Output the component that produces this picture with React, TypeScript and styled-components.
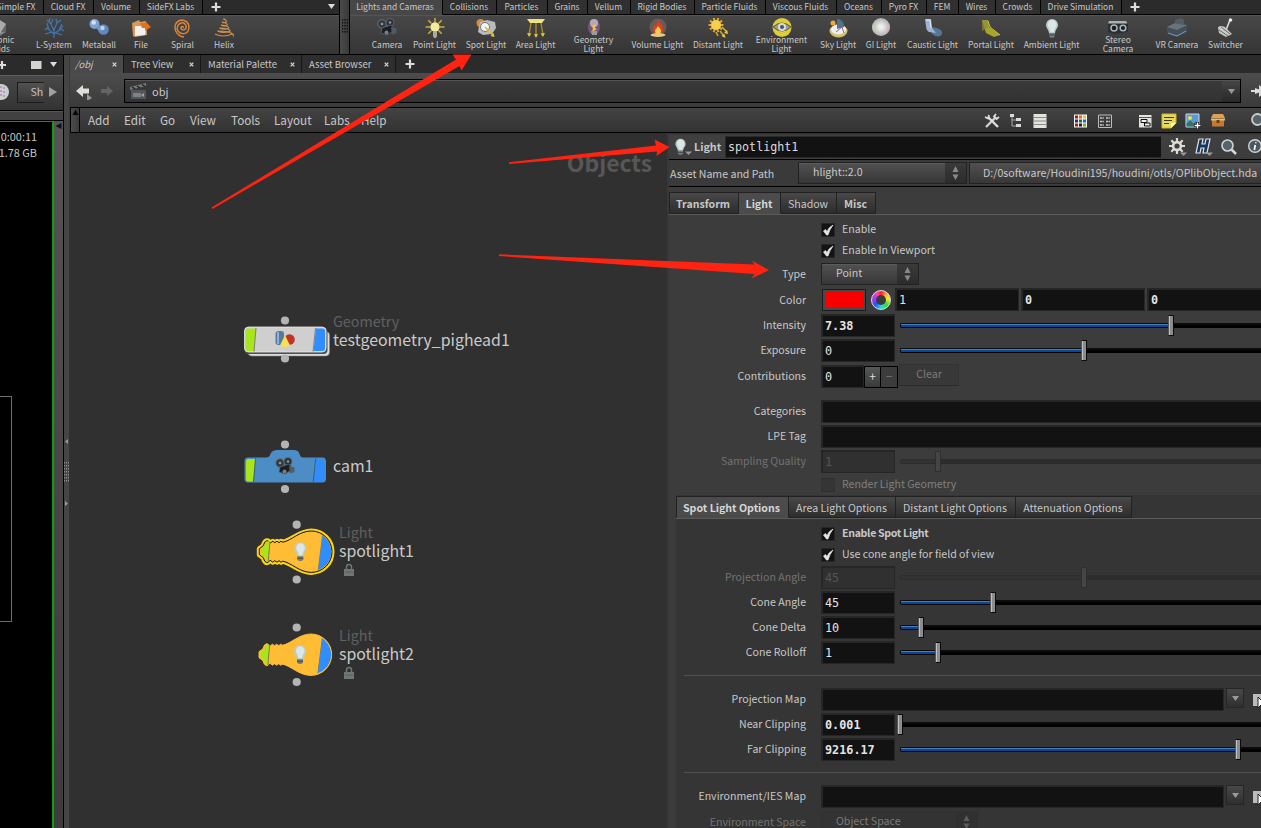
import React from 'react';
import styled, { createGlobalStyle, css } from 'styled-components';

const Global = createGlobalStyle`
  * { box-sizing: border-box; }
  body {
    margin: 0; background: #303030; overflow: hidden; color: #c8c8c8;
    font-family: "Noto Sans CJK SC", "Noto Sans", sans-serif; font-size: 10.6px;
    line-height: 14px; white-space: nowrap;
  }
`;
const mono = css`font-family: "DejaVu Sans Mono", "Liberation Mono", monospace;`;
const raised = css`background: linear-gradient(#515151, #373737);`;

/* ---------- frame ---------- */
const Window = styled.div`position: relative; width: 1261px; height: 828px; overflow: hidden; display: flex; flex-direction: column;`;
const Shelves = styled.div`display: flex; height: 55px; flex: none; border-bottom: 1px solid #000;`;
const Shelf = styled.div<{ $w?: number }>`
  display: flex; flex-direction: column; overflow: hidden;
  ${p => (p.$w ? `width: ${p.$w}px; flex: none;` : 'flex: 1;')}
`;
const ShelfTabs = styled.div`display: flex; height: 15px; flex: none; background: #2b2b2b; align-items: stretch; font-size: 8.5px;`;
const ShelfTab = styled.div<{ $w: number; $on?: boolean; $ml?: number }>`
  width: ${p => p.$w}px; flex: none; margin-left: ${p => p.$ml ?? 0}px; line-height: 13px; text-align: center;
  border-right: 1px solid #000; border-bottom: 1px solid ${p => (p.$on ? '#474747' : '#000')};
  background: ${p => (p.$on ? '#474747' : '#303030')}; padding-right: ${p => (p.$on ? 2 : 1)}px;
`;
const TabRest = styled.div<{ $flat?: boolean }>`
  flex: 1; display: flex; align-items: center; justify-content: space-between;
  padding: 0 4px 1px ${p => (p.$flat ? 9 : 8)}px; border-bottom: ${p => (p.$flat ? 0 : 1)}px solid #000;
`;
const Tools = styled.div<{ $pl: number }>`
  flex: 1; display: flex; padding-left: ${p => p.$pl}px; background: linear-gradient(#484848, #353535);
  border-top: 1px solid #555;
`;
const Tool = styled.div<{ $w: number; $ml?: number; $mr?: number }>`
  width: ${p => p.$w}px; flex: none; margin: 0 ${p => p.$mr ?? 0}px 0 ${p => p.$ml ?? 0}px; padding-top: 2px;
  display: flex; flex-direction: column; align-items: center; font-size: 8.5px;
`;
const ToolLabel = styled.div<{ $two?: boolean }>`
  line-height: 9px; text-align: center; white-space: pre; margin-top: ${p => (p.$two ? -3 : 2)}px; position: relative;
`;
const Grip = styled.div`
  width: 11px; flex: none; background: linear-gradient(90deg, #4b4b4b, #3a3a3a); border: solid #000; border-width: 0 1px;
  display: flex; justify-content: center; padding-top: 19px;
`;
const Main = styled.div`flex: 1; display: flex; min-height: 0;`;

/* ---------- left viewer ---------- */
const Viewer = styled.div`width: 64px; flex: none; border-right: 1px solid #000; display: flex; flex-direction: column; overflow: hidden;`;
const ViewerTabs = styled.div`height: 20px; flex: none; background: #2b2b2b; display: flex; align-items: center; justify-content: space-between; padding: 0 6px 1px 0;`;
const ViewerTools = styled.div`
  height: 36px; flex: none; border-top: 1px solid #606060; border-bottom: 1px solid #000; background: linear-gradient(#484848, #333);
  display: flex; align-items: center; justify-content: space-between; padding: 0 6px 2px 0;
`;
const ShButton = styled.div`width: 27px; height: 21px; ${raised} border: 1px solid #1c1c1c; border-right: 0; padding: 2px 0 0 13px;`;
const ViewerBar = styled.div`height: 10px; flex: none; background: #414141; border-top: 1px solid #555; border-bottom: 1px solid #000;`;
const ViewerBody = styled.div`flex: 1; display: flex; min-height: 0;`;
const Viewport = styled.div`
  width: 53px; background: #000; border: solid #0b970b; border-width: 1px 1px 0 0; padding: 6px 15px 0 0;
  display: flex; flex-direction: column; align-items: flex-end; font-size: 10.9px; line-height: 16px; overflow: hidden;
`;
const SafeFrame = styled.div`width: 12px; height: 226px; border: solid #6c6c6c; border-width: 1px 1px 1px 0; align-self: flex-start; margin-top: 236px;`;
const Strip = styled.div`width: 10px; background: linear-gradient(#555, #4c4c4c 30%, #3c3c3c); border-left: 1px solid #666; padding: 1px 0 0 1px;`;
const Splitter = styled.div`
  width: 6px; flex: none; background: #454545; display: flex; flex-direction: column; align-items: center; justify-content: flex-start; padding-top: 383px; border-right: 1px solid #3a3a3a;
`;

/* ---------- network pane ---------- */
const Pane = styled.div`flex: 1; display: flex; flex-direction: column; min-width: 0; background: #3a3a3a;`;
const PaneTabs = styled.div`height: 18px; flex: none; display: flex; background: #2b2b2b; font-size: 9.5px;`;
const PaneTab = styled.div<{ $w: number; $on?: boolean }>`
  width: ${p => p.$w}px; flex: none; display: flex; align-items: center; justify-content: space-between; padding: 0 6px 0 7px;
  border-right: 1px solid #171717; ${p => (p.$on ? 'background:#494949;font-style:italic;padding:0 6px 0 5px;' : 'background:#2e2e2e;')}
`;
const PathRow = styled.div`
  height: 35px; flex: none; display: flex; align-items: center; background: linear-gradient(#4c4c4c, #4a4a4a 5px, #3a3a3a); border-bottom: 1px solid #000; padding-top: 2px;
`;
const PathField = styled.div`
  width: 1117px; height: 24px; flex: none; border: 1px solid #000; background: linear-gradient(#3a3a3a, #323232);
  box-shadow: inset 0 1px #555; display: flex; align-items: center; padding-left: 5px; font-size: 11px; gap: 5px;
`;
const PathDrop = styled.div`margin-left: auto; width: 18px; height: 21px; background: linear-gradient(#454545, #282828); display: flex; align-items: center; justify-content: center;`;
const MenuRow = styled.div`
  height: 25px; flex: none; display: flex; align-items: center; background: linear-gradient(#434343, #333);
  border-bottom: 1px solid #000; font-size: 11.7px;
`;
const MenuHandle = styled.div`width: 10px; align-self: stretch; flex: none; background: linear-gradient(90deg,#4c4c4c,#3a3a3a); border: solid #000; border-width: 0 1px; padding: 1px 0 0 1px;`;
const MenuItem = styled.div<{ $w: number }>`width: ${p => p.$w}px; flex: none; padding-bottom: 1px;`;
const MenuIcon = styled.div<{ $ml: number }>`margin-left: ${p => p.$ml}px; flex: none; padding-top: 2px;`;
const Content = styled.div`flex: 1; display: flex; min-height: 0;`;

const Canvas = styled.div`position: relative; width: 598px; flex: none; margin-left: -1px; background: #303030; overflow: hidden;`;
const Watermark = styled.div`position: absolute; right: 15px; top: 13px; font: bold 22.9px/32px "Noto Sans CJK SC", sans-serif; color: #575757;`;
const NodeArt = styled.svg`position: absolute; left: 0; top: 0;`;
const NodeLabel = styled.div<{ $x: number; $y: number }>`
  position: absolute; left: ${p => p.$x}px; top: ${p => p.$y}px; font-size: 15.9px; line-height: 20px; color: #cacaca;
`;
const NodeType = styled.div`font-size: 14.3px; line-height: 17px; height: 18px; margin-top: -1px; color: #606060;`;

/* ---------- parameters ---------- */
const Params = styled.div`flex: 1; min-width: 0; background: #3c3c3c; border-left: 2px solid #383838; display: flex; flex-direction: column; overflow: hidden;`;
const Header = styled.div`height: 27px; flex: none; display: flex; align-items: center; border-bottom: 1px solid #000; background: linear-gradient(#333 1px, #404040 2px, #3c3c3c); padding-left: 4px;`;
const OpType = styled.div`font-weight: bold; font-size: 10.7px; width: 31px; flex: none; margin-left: 1px; padding-top: 1px;`;
const NameField = styled.div`width: 436px; height: 22px; flex: none; margin-top: 1px; background: #121212; border: 1px solid #2a2a2a; border-right: 0; ${mono} font-size: 11.7px; color: #dcdcdc; padding: 3px 0 0 2px;`;
const HeaderIcons = styled.div`display: flex; gap: 6px; padding: 1px 0 0 6px;`;
const AssetRow = styled.div`height: 27px; flex: none; display: flex; align-items: center; border-bottom: 1px solid #000; padding: 0 0 1px 1px; background: #3a3a3a;`;
const AssetLabel = styled.div`width: 128px; flex: none; padding-top: 3px;`;
const PathButton = styled.div`margin-left: 2px; width: 320px; height: 22px; flex: none; ${raised} border: 1px solid #222; padding: 3px 0 0 13px;`;
const Combo = styled.div<{ $w: number; $off?: boolean }>`
  width: ${p => p.$w}px; height: 22px; flex: none; display: flex; ${raised} border: 1px solid #222; box-shadow: inset 0 1px #5a5a5a; line-height: 18px; padding-left: 14px;
  ${p => p.$off && 'background:#333;box-shadow:none;border-color:#303030;color:#7b7b7b;'}
`;
const ComboArrows = styled.div<{ $off?: boolean }>`margin-left: auto; width: 21px; background: ${p => (p.$off ? '#303030' : 'linear-gradient(#3a3a3a,#2c2c2c)')}; display: flex; align-items: center; justify-content: center;`;

const Tabs = styled.div<{ $mt: number }>`display: flex; height: 23px; flex: none; margin-top: ${p => p.$mt}px; border-bottom: 1px solid #5a5a5a;`;
const Tab = styled.div<{ $w: number; $on?: boolean; $b?: boolean }>`
  width: ${p => p.$w}px; flex: none; text-align: center; line-height: 22px; border: 1px solid #222; border-left-width: 0; padding-right: 1px;
  &:first-child { border-left-width: 1px; padding-right: 2px; }
  font-weight: ${p => (p.$b ? 'bold' : 'normal')};
  ${p => (p.$on ? 'background:#4b4b4b;border-bottom-color:#4b4b4b;color:#d6d6d6;' : css`background: linear-gradient(#484848, #2d2d2d);`)}
`;
const Sub = styled.div`margin-left: 7px; background: #353535; flex: 1; display: flex; flex-direction: column;`;
const Row = styled.div<{ $h?: number; $mt?: number }>`display: flex; align-items: center; height: ${p => p.$h ?? 25}px; flex: none; margin-top: ${p => p.$mt ?? 0}px;`;
const Label = styled.div<{ $w: number; $off?: boolean; $dy?: number }>`
  width: ${p => p.$w}px; flex: none; margin-right: 15px; text-align: right; color: ${p => (p.$off ? '#737373' : '#c8c8c8')};
  padding-top: ${p => p.$dy ?? 0}px; padding-bottom: 1px;
`;
const Field = styled.div<{ $w: number; $b?: boolean; $off?: boolean; $gap?: number }>`
  width: ${p => p.$w}px; height: 23px; flex: none; border: 1px solid #262626; border-width: 2px 1px 1px 2px; background: ${p => (p.$off ? '#303030' : '#121212')};
  ${mono} font-size: 11.8px; font-weight: ${p => (p.$b ? 'bold' : 'normal')}; line-height: 20px; padding-left: 2px; margin-right: ${p => p.$gap ?? 0}px;
  color: ${p => (p.$off ? '#555' : '#e4e4e4')};
`;
const Check = styled.div<{ $off?: boolean }>`
  width: 14px; height: 14px; flex: none; margin: 1px 7px 0 0; background: ${p => (p.$off ? '#353535' : '#131313')}; border: 1px solid ${p => (p.$off ? '#303030' : '#262626')};
`;
const CheckText = styled.div<{ $off?: boolean; $b?: boolean }>`color: ${p => (p.$off ? '#808080' : '#c8c8c8')}; font-weight: ${p => (p.$b ? 'bold' : 'normal')}; letter-spacing: ${p => (p.$b ? '-0.32px' : '0')}; padding-bottom: 1px;`;
const Track = styled.div<{ $off?: boolean }>`
  width: 420px; height: 5px; flex: none; margin: 0 0 0 5px; background: ${p => (p.$off ? '#2c2c2c' : '#000')}; display: flex; align-items: center; border-radius: 2px;
  box-shadow: inset 0 2px ${p => (p.$off ? '#2e2e2e' : '#0c0c0c')};
`;
const Fill = styled.div<{ $w: number; $off?: boolean }>`
  width: ${p => p.$w}px; height: 3px; flex: none; margin-left: 1px; ${p => (p.$off ? 'background:#333;' : 'background: linear-gradient(#4a7fb5 1px, #04489c 1px);')}
`;
const Handle = styled.div<{ $off?: boolean; $min?: boolean }>`
  width: 6px; height: 21px; flex: none; margin-left: ${p => (p.$min ? -4 : -1)}px; background: ${p => (p.$off ? '#454545' : 'linear-gradient(90deg,#c0c0c0 1px,#8c8c8c 1px 4px,#5c5c5c 4px)')}; border: 1px solid ${p => (p.$off ? '#2e2e2e' : '#0b0b0b')}; border-left-color: ${p => (p.$off ? '#2e2e2e' : '#555')};
`;
const Swatch = styled.div`width: 44px; height: 22px; margin: 0 3px 0 1px; border: 1px solid #1c1c1c; background: #f80000; box-shadow: inset 0 0 0 2px #484848; flex: none;`;
const Wheel = styled.div`
  width: 20px; height: 20px; border-radius: 50%; flex: none; margin: 0 4px 0 2px; border: 1px solid #ddd; display: flex; align-items: center; justify-content: center;
  background: conic-gradient(#f22, #fb3 50deg, #ee3 80deg, #3d3 130deg, #2dd 180deg, #25f 230deg, #b3f 290deg, #f4a 330deg, #f22);
  &::after { content: ''; width: 10px; height: 10px; border-radius: 50%; background: #3c3c3c; }
`;
const Small = styled.div<{ $off?: boolean }>`
  width: ${p => (p.$off ? 18 : 17)}px; height: 22px; flex: none; border: 1px solid #000; margin-left: ${p => (p.$off ? -1 : 0)}px;
  ${p => (p.$off ? 'background:#3c3c3c;color:#777;' : 'background:linear-gradient(#585858,#3a3a3a);color:#ddd;')} text-align: center; line-height: 18px; font-size: 12px;
`;
const Clear = styled.div`width: 60px; height: 22px; margin: -3px 0 0 1px; background: #383838; border: 1px solid #333; border-bottom-color: #2b2b2b; color: #7c7c7c; text-align: center; line-height: 18px; flex: none;`;
const Divider = styled.div<{ $mt: number; $mb: number }>`height: 1px; flex: none; background: #505050; margin: ${p => p.$mt}px 0 ${p => p.$mb}px 8px;`;
const Drop = styled.div`width: 18px; height: 20px; flex: none; margin: -3px 8px 0 2px; background: linear-gradient(#484848, #2f2f2f); border: 1px solid #262626; display: flex; align-items: center; justify-content: center;`;
const Overlay = styled.svg`position: absolute; left: 0; top: 0; pointer-events: none;`;
const Glyph = styled.svg`flex: none; display: block;`;

/* ---------- small drawings ---------- */
const Svg = ({ s = 20, w, children }: { s?: number; w?: number; children: React.ReactNode }) => (
  <Glyph width={w ?? s} height={s} viewBox={`0 0 ${w ?? s} ${s}`}>{children}</Glyph>
);
const Plus = () => <Svg s={10}><path d="M5 .5v9M.5 5h9" stroke="#dcdcdc" strokeWidth="2.200" /></Svg>;
const Tri = ({ c = '#ddd', s = 7 }: { c?: string; s?: number }) => <Svg s={s}><path d={`M0 1H${s}L${s / 2} ${s - 1}Z`} fill={c} /></Svg>;
const X = () => <Svg s={5}><path d="M.7 .7l3.600 3.600M4.300 .7L.7 4.300" stroke="#d8d8d8" strokeWidth="1.200" /></Svg>;
const UpDown = ({ c = '#8a8a8a' }: { c?: string }) => <Svg s={14} w={7}><path d="M.5 6L3.500 0l3 6zM.5 8.500l3 5.500l3-5.500z" fill={c} /></Svg>;
const Bulb = ({ dx = 0, dy = 0, k = 1 }: { dx?: number; dy?: number; k?: number }) => (
  <g transform={`translate(${dx} ${dy}) scale(${k})`}>
    <path d="M10 1a6 6 0 0 1 6 6c0 3-2.500 4-3 8H7c-.5-4-3-5-3-8a6 6 0 0 1 6-6z" fill="#b9cccd" />
    <path d="M10 2a4.500 4.500 0 0 1 4.500 5c0 2-2 3-2.500 7H8.500C8 10 6 9 6 7a4 4.500 0 0 1 4-5z" fill="#dbe7e6" />
    <path d="M7 15h6v3l-1.500 1.800h-3L7 18z" fill="#777d78" /><path d="M7 17h6" stroke="#444" />
  </g>
);
const Cam = () => (
  <g>
    <circle cx="5" cy="6" r="4.300" fill="#343b41" stroke="#687178" /><circle cx="13" cy="4.500" r="4" fill="#2b3136" stroke="#5f676e" />
    <path d="M5 10l9-3 4 5-8 5-6-2z" fill="#1b1f23" stroke="#5d656d" strokeWidth=".8" /><path d="M14 9l5.500 1.500v4.500L15 16.500z" fill="#525b64" />
    <circle cx="5" cy="6" r="1.300" fill="#8b959d" /><circle cx="13" cy="4.500" r="1.300" fill="#8b959d" /><circle cx="9.500" cy="14.500" r="2" fill="#75808a" />
  </g>
);
const rays = (n: number, r1: number, r2: number, cx = 10, cy = 9) =>
  Array.from({ length: n }, (_, i) => { const a = (i * 2 * Math.PI) / n; return `M${cx + r1 * Math.cos(a)} ${cy + r1 * Math.sin(a)}L${cx + r2 * Math.cos(a)} ${cy + r2 * Math.sin(a)}`; }).join('');

const art: Record<string, React.ReactNode> = {
  platonic: <><path d="M10 1l8 5v8l-8 5-8-5V6z" fill="#858585" /><path d="M10 1l8 5-5 8-3 5V8z" fill="#aaa" /><path d="M18 6v8l-5 0z" fill="#666" /></>,
  lsystem: <path d="M10 20L10 11M10 16L3 10L1 12M5 12L3 5M10 13L7 6L3 2M7 6L9 1M10 12L13 5L12 1M13 5L17 2M10 16L17 11L20 13M15 12L18 6M8 14L1 16M12 15L18 17M5 4L6 0M17 11L19 8" stroke="#4077b8" strokeWidth="1.200" fill="none" />,
  metaball: <><circle cx="5.500" cy="6" r="5" fill="#7fa2d4" /><circle cx="14.500" cy="11.500" r="5.300" fill="#5f87c0" /><path d="M7 10l4-3 3 3-3 4z" fill="#6f95cb" /><circle cx="4.700" cy="4.500" r="2.300" fill="#d3e2f8" /><circle cx="13.500" cy="10" r="2.200" fill="#bcd2f2" /></>,
  file: <><path d="M1 5l7-3 1 2 6-1 1 14-12 2-2-1z" fill="#d79a55" /><path d="M4 8h12l-2 9-10 1z" fill="#f0f0ee" /><path d="M9 5h5V3l6 6-6 4v-3h-3z" fill="#e8701a" /></>,
  spiral: <path d="M10 10c1-2-2-2-2 0s4 3 5 0-2-6-5-5-5 5-3 8 8 4 10 0 1-9-4-10.500-9 2-9 7 4 9 9 9.500" stroke="#d9843a" strokeWidth="1.500" fill="none" />,
  helix: <path d="M9 1h2M8 4q2 1.500 4.500 0M7 7q3 2 6.500 0M5.500 10q4.500 2.500 9.500 0M3.500 13q6 3 13 0M1 16q8 4 17 0M10 1q3 1.500 2 3M8 4q5 1 5.500 3M7 7q7 1 8 3M5.500 10q9 0 11 3M3.500 13q12 0 15 3t1 3" stroke="#cf8f4f" strokeWidth="1.200" fill="none" />,
  camera: <Cam />,
  point: <><path d={rays(8, 5, 9.500)} stroke="#c8b23a" strokeWidth="1.500" /><circle cx="10" cy="9" r="4.700" fill="#f3ec9c" /><path d="M8 13h4v5l-1 2H9l-1-2z" fill="#a9a9a0" /></>,
  spot: <><circle cx="4.500" cy="5" r="4" fill="#d98a35" /><path d="M4 4l7-2 8 2 1 6-4 6-9 1-5-3 1-6z" fill="#b9bbb8" /><circle cx="9" cy="9" r="4.500" fill="#f4f4f2" stroke="#777" /><path d="M9 9l8 8" stroke="#d9bd28" strokeWidth="1.600" /><path d="M18.500 19l-4-1 3-3z" fill="#ecd031" /></>,
  area: <><path d="M1 1h18l-3 4H4z" fill="#f2e27f" /><path d="M5 5L3 17M10 5v14M15 5l2 12" stroke="#a98c26" strokeWidth="1.400" /><path d="M1 15l2 4 2.500-3.500zM8 16l2 4 2-4zM14.500 15.500L17 19l2-4z" fill="#e3c53a" /></>,
  geo: <><ellipse cx="10" cy="9" rx="6" ry="8" fill="#74577f" /><circle cx="10" cy="5" r="4" fill="#b5a9b8" /><path d="M7 8l5-2-1 4 2 1-5 3 1-4z" fill="#efc04a" /><path d="M7 13h6v4H8z" fill="#9b9b9b" /></>,
  volume: <><circle cx="10" cy="9" r="8.500" fill="#645e5b" /><path d="M10 1c1 4 5 5 5 10 0 3-2 5-5 5s-5-2-5-5c0-2 1-3 2-5 0 2 1 2 1 2s2-3 2-7z" fill="#e0401d" /><path d="M10 7c0 3 3 3 3 6 0 2-1 3-3 3s-3-1-3-3 3-3 3-6z" fill="#f8ce52" /><ellipse cx="10" cy="17" rx="7.500" ry="1.900" fill="#e6cc7b" /></>,
  distant: <><path d={rays(10, 4, 7.500, 8, 7)} stroke="#e2a326" strokeWidth="2" /><circle cx="8" cy="7" r="5" fill="#f5cf4d" /><path d="M12 13l4 5M14 9l5 5M8 14l2 4" stroke="#cdb02f" strokeWidth="1.500" /><path d="M17.500 20l-4-2 3-2zM20 16l-4-1 3-3z" fill="#e8cf45" /></>,
  env: <><circle cx="10" cy="9.500" r="9.500" fill="#dccd3c" /><path d="M1 9q9-8 18 0q-9 8-18 0z" fill="#999c96" stroke="#5e5b30" /><circle cx="10" cy="9" r="4" fill="#d9dcd9" /><circle cx="10" cy="9" r="2" fill="#465566" /></>,
  sky: <><ellipse cx="10.500" cy="13" rx="9" ry="6.500" fill="#d3c172" /><ellipse cx="10.500" cy="11.500" rx="7.500" ry="5" fill="#efefee" /><path d="M9 1q7 0 7 8l-7 2z" fill="#53718c" /><circle cx="5" cy="5" r="2.500" fill="#efa63c" /><path d="M8 14l6-5M14 9l2 6" stroke="#89669a" /></>,
  gi: <><defs><radialGradient id="gi"><stop offset=".2" stopColor="#ededea" /><stop offset="1" stopColor="#b1afb0" /></radialGradient></defs><circle cx="10" cy="9" r="9" fill="url(#gi)" /><path d="M2 6a9 9 0 0 0 1 9q3-5-1-9z" fill="#b8d8b2" opacity=".7" /><path d="M18 6a9 9 0 0 1-1 9q-3-5 1-9z" fill="#dcaecb" opacity=".6" /></>,
  caustic: <><path d="M8 9q12 1 11 7-3 5-10 0z" fill="#5a7493" /><path d="M2 1h6l1 9 4 5-7-1q-3-2-3-6z" fill="#9fb4d2" /><path d="M3 2h4l1 8" stroke="#e8eef8" fill="none" /></>,
  portal: <><path d="M1 2l6 0 1 7 11 8-6 2-8-4z" fill="#a8a52b" /><path d="M1 2l6 0v8l-6 3z" fill="#8c8b35" opacity=".7" /><path d="M7 3l2 6 10 8" stroke="#cfc93e" fill="none" /></>,
  bulb: <Bulb />,
  stereo: <><path d="M0 5l14-1 6 1v9l-14 2-6-2z" fill="#2a2f34" /><path d="M1 3h17l1.500 2.500H0z" fill="#a9b2b7" /><circle cx="6" cy="10" r="3" fill="#1a1d20" stroke="#aab4ba" strokeWidth="1.500" /><circle cx="15" cy="10" r="2.800" fill="#1a1d20" stroke="#aab4ba" strokeWidth="1.500" /></>,
  vr: <><path d="M0 9l8-4 12 2v7l-10 5-10-4z" fill="#454e57" /><path d="M0 9l8-4 12 2-10 5z" fill="#68737d" /><path d="M8 5V2l6-2 3 2v5z" fill="#525c65" /><path d="M1 15l9 3 9-5" stroke="#6f9acb" fill="none" /></>,
  switcher: <><path d="M10 12L14 2" stroke="#ddd" strokeWidth="1.600" /><circle cx="14.500" cy="2" r="1.800" fill="#eee" /><path d="M2 9q5-3 9 2l5 5-6 3-7-4z" fill="#c9c9c5" /><path d="M3 12l9 6M5 9l9 7" stroke="#6a6a6a" /></>,
};

const leftTools: [string, string, number][] = [['lsystem', 'L-System', 46], ['metaball', 'Metaball', 44], ['file', 'File', 40], ['spiral', 'Spiral', 43], ['helix', 'Helix', 40]];
const rightTools: [string, string, number][] = [
  ['camera', 'Camera', 46], ['point', 'Point Light', 49], ['spot', 'Spot Light', 54], ['area', 'Area Light', 45], ['geo', 'Geometry\nLight', 71],
  ['volume', 'Volume Light', 57], ['distant', 'Distant Light', 64], ['env', 'Environment\nLight', 63], ['sky', 'Sky Light', 50], ['gi', 'GI Light', 36],
  ['caustic', 'Caustic Light', 67], ['portal', 'Portal Light', 50], ['bulb', 'Ambient Light', 71], ['stereo', 'Stereo\nCamera', 62], ['vr', 'VR Camera', 56], ['switcher', 'Switcher', 41],
];
const rightTabs: [string, number][] = [['Lights and Cameras', 93], ['Collisions', 54], ['Particles', 51], ['Grains', 40], ['Vellum', 43], ['Rigid Bodies', 64], ['Particle Fluids', 71], ['Viscous Fluids', 71], ['Oceans', 45], ['Pyro FX', 45], ['FEM', 32], ['Wires', 37], ['Crowds', 45], ['Drive Simulation', 81]];

const ToolItem = ({ icon, label, w, ml, mr }: { icon: string; label: string; w: number; ml?: number; mr?: number }) => (
  <Tool $w={w} $ml={ml} $mr={mr}><Svg>{art[icon]}</Svg><ToolLabel $two={label.includes('\n')}>{label}</ToolLabel></Tool>
);
const CheckRow = ({ text, w, off, b, mt }: { text: string; w: number; off?: boolean; b?: boolean; mt?: number }) => (
  <Row $h={21} $mt={mt}><Label $w={w} /><Check $off={off}>{!off && <Svg s={12}><path d="M1.500 7L3.500 5.500L5 7.500Q7 3 11 1Q7.500 5.500 6 11H4.500Z" fill="#e6e6e6" stroke="#e6e6e6" strokeWidth=".7" /></Svg>}</Check><CheckText $off={off} $b={b}>{text}</CheckText></Row>
);
const SliderRow = ({ text, value, w, at, b, off, mt }: { text: string; value: string; w: number; at: number; b?: boolean; off?: boolean; mt?: number }) => (
  <Row $mt={mt}><Label $w={w} $off={off}>{text}</Label><Field $w={74} $b={b} $off={off}>{value}</Field><Track $off={off}><Fill $w={Math.max(0, at - 902)} $off={off} /><Handle $off={off} $min={at <= 900} /></Track></Row>
);
const MapRow = ({ text }: { text: string }) => (
  <Row><Label $w={130}>{text}</Label><Field $w={403} /><Drop><Tri c="#999" /></Drop><Svg s={16}><path d="M1 2h9v12H1z" fill="#bbb" /><path d="M6 5l8 8H9l-3 3z" fill="#fff" stroke="#222" /></Svg></Row>
);

const bulbPath = 'M-52 0V-3L-48-6Q-47-10.500-44.500-11L-43-10.500-41.500-8.700L-40.500-9L-38.500-10.500L-36.500-9L-34.300-10.500L-32.300-9L-30.300-10.500L-28.500-9.500C-20-11-12-20.700 0-20.700A20.700 20.700 0 0 1 0 20.700C-12 20.700-20 11-28.500 9.500L-30.300 10.500L-32.300 9L-34.300 10.500L-36.500 9L-38.500 10.500L-40.500 9L-41.500 8.700L-43 10.500L-44.500 11Q-47 10.500-48 6L-52 3Z';
const Dot = ({ x, y }: { x: number; y: number }) => <circle cx={x} cy={y} r="4.100" fill="#b4b4b4" />;
const BulbNode = ({ x, y, sel }: { x: number; y: number; sel?: boolean }) => (
  <g transform={`translate(${x} ${y})`}>
    {sel && <path d={bulbPath} fill="none" stroke="#ffd410" strokeWidth="5" strokeLinejoin="round" />}
    <path d={bulbPath} fill="#ffbd35" stroke={sel ? '#111' : '#ffbd35'} strokeWidth="1" strokeLinejoin="round" />
    <g clipPath="url(#bulbClip)"><path d="M-56-14h15L-43.500 14H-56z" fill="#a8e51c" /><path d="M-41-14L-43.500 14M12-22L6.500 22" stroke="#8b7a3a" /><path d="M12-22h14v44H6.500z" fill="#2f8dff" /></g>
    <Bulb dx={-21} dy={-10.5} />
  </g>
);
const Lock = ({ x, y }: { x: number; y: number }) => <g transform={`translate(${x} ${y})`}><rect x="0" y="5" width="10" height="7" fill="#6f7775" /><path d="M2.500 5V3a2.500 2.500 0 0 1 5 0v2" stroke="#6f7775" strokeWidth="1.500" fill="none" /><path d="M1 8h8" stroke="#59615f" /></g>;

export default function App() {
  return (
    <Window>
      <Global />
      <Shelves>
        <Shelf $w={339}>
          <ShelfTabs>
            <ShelfTab $w={54} $ml={-10}>Simple FX</ShelfTab><ShelfTab $w={50}>Cloud FX</ShelfTab><ShelfTab $w={46}>Volume</ShelfTab><ShelfTab $w={63}>SideFX Labs</ShelfTab>
            <TabRest><Plus /><Tri /></TabRest>
          </ShelfTabs>
          <Tools $pl={0}>
            <ToolItem icon="platonic" label={'Platonic\nSolids'} w={40} ml={-22} mr={13} />
            {leftTools.map(t => <ToolItem key={t[1]} icon={t[0]} label={t[1]} w={t[2]} />)}
          </Tools>
        </Shelf>
        <Grip><Svg s={16} w={6}><path d="M.5 0v15M3 0v15M5.500 0v15" stroke="#111" strokeDasharray="1.500 1.500" strokeWidth="1.400" /></Svg></Grip>
        <Shelf>
          <ShelfTabs>
            {rightTabs.map((t, i) => <ShelfTab key={t[0]} $w={t[1]} $on={i === 0}>{t[0]}</ShelfTab>)}
            <TabRest><Plus /></TabRest>
          </ShelfTabs>
          <Tools $pl={14}>{rightTools.map(t => <ToolItem key={t[1]} icon={t[0]} label={t[1]} w={t[2]} />)}</Tools>
        </Shelf>
      </Shelves>

      <Main>
        <Viewer>
          <ViewerTabs>
            <Svg s={10} w={8}><path d="M2 1v8M-2 5h8" stroke="#dcdcdc" strokeWidth="2.200" /></Svg>
            <Svg s={10} w={38}><path d="M21 1h10.500v8H21z" fill="#d5d5cf" /></Svg><Tri />
          </ViewerTabs>
          <ViewerTools>
            <Svg s={18} w={11}><circle cx="1" cy="9" r="8" fill="#c9cfd3" /><path d="M1 3v12M4 4v10" stroke="#b06a92" strokeDasharray="2 2" /></Svg>
            <ShButton>Sh</ShButton><Svg s={10} w={8}><path d="M0 0l8 5-8 5z" fill="#a0a0a0" /></Svg>
          </ViewerTools>
          <ViewerBar />
          <ViewerBody>
            <Viewport><span>0:00:11</span><span>1.78 GB</span><SafeFrame /></Viewport>
            <Strip><Svg s={8} w={7}><path d="M6.500 1v6L.5 4z" fill="#111" /></Svg></Strip>
          </ViewerBody>
        </Viewer>
        <Splitter>
          <Svg s={70} w={5}><path d="M4 1v5L1 3.500zM1 63v5l3-2.500z" fill="#9a9a9a" /><path d="M.5 24v20M2.500 24v20M4.500 24v20" stroke="#8c8c8c" strokeDasharray="1.500 1.500" /></Svg>
        </Splitter>

        <Pane>
          <PaneTabs>
            <PaneTab $w={54} $on>/obj <X /></PaneTab><PaneTab $w={77}>Tree View <X /></PaneTab><PaneTab $w={101}>Material Palette <X /></PaneTab><PaneTab $w={94}>Asset Browser <X /></PaneTab>
            <TabRest $flat><Plus /></TabRest>
          </PaneTabs>
          <PathRow>
            <Svg s={18} w={54}>
              <path d="M6 9l7-6v3.500h6v5h-6V15z" fill="#dededa" /><path d="M17 12l5 4-5 3z" fill="#999" />
              <path d="M43 9l-6-5v3h-6v4h6v3z" fill="#646464" />
            </Svg>
            <PathField>
              <Svg s={18} w={17}><path d="M0 5l16-4v3L0 8z" fill="#777" /><path d="M2 5l3 2M7 4l3 2M12 2.500l3 2" stroke="#222" strokeWidth="1.500" /><path d="M1 8h15v9H1z" fill="#50575a" /><path d="M3 11h8v4H3z" fill="#7b8385" /><path d="M11 13l3-2v4z" fill="#9ea4a6" /></Svg>
              obj<PathDrop><Tri c="#999" /></PathDrop>
            </PathField>
            <Svg s={14} w={20}><path d="M10 7h7" stroke="#ddd" strokeWidth="2" /><path d="M14 4v6l4-1.500V13l2.500-2V3L18 1v4.500z" fill="#ddd" /></Svg>
          </PathRow>
          <MenuRow>
            <MenuHandle><Svg s={7}><path d="M.5 6h6L3.500.5z" fill="#080808" /></Svg></MenuHandle><MenuItem $w={8} />
            {([['Add', 36], ['Edit', 36], ['Go', 30], ['View', 41], ['Tools', 43], ['Layout', 50], ['Labs', 37], ['Help', 40]] as [string, number][]).map(m => <MenuItem key={m[0]} $w={m[1]}>{m[0]}</MenuItem>)}
            <MenuIcon $ml={583}><Svg s={16}><path d="M2 14L12 4" stroke="#cfcfcf" strokeWidth="2.400" /><path d="M4 4l10 10" stroke="#dedede" strokeWidth="2.400" /><path d="M12 1l-2 2.500 2.500 2.500L15 4M1 4l3 1.500L5 2" stroke="#dedede" strokeWidth="1.800" fill="none" /></Svg></MenuIcon>
            <MenuIcon $ml={8}><Svg s={16}><path d="M4 4v9h4M4 7h4" stroke="#aaa" fill="none" /><path d="M2 1h4v3H2zM8 5h5v3H8zM8 11h5v3H8z" fill="#d9d9d9" /></Svg></MenuIcon>
            <MenuIcon $ml={8}><Svg s={16}><path d="M1.500 1h13v14h-13z" fill="#e4e4de" /><path d="M1.500 4.500h13M1.500 8h13M1.500 11.500h13" stroke="#8d8d88" /></Svg></MenuIcon>
            <MenuIcon $ml={25}><Svg s={16}><path d="M1 1.500h13v13H1z" fill="#f4f4f4" />{['#b11', '#e62', '#dc2', '#137', '#264', '#26c', '#b11', '#222', '#8a2'].map((c, i) => <rect key={i} x={2 + (i % 3) * 4} y={2.5 + Math.floor(i / 3) * 4} width="3" height="3" fill={c} />)}</Svg></MenuIcon>
            <MenuIcon $ml={8}><Svg s={16}><path d="M1.500 2h13v12.500h-13z" fill="none" stroke="#bbb" /><path d="M3 5h4M9 5h4M3 8.500h4M9 8.500h4M3 12h4M9 12h4" stroke="#ccc" strokeWidth="1.500" strokeDasharray="2.500 .7" /></Svg></MenuIcon>
            <MenuIcon $ml={24}><Svg s={16}><path d="M2 2h12.500v12.500H2z" fill="#e4e4e0" /><path d="M2 4.500h12.500" stroke="#555" /><path d="M4 6.500h6v3H4zM7.500 10H13v3H7.500z" fill="#eee" stroke="#111" /></Svg></MenuIcon>
            <MenuIcon $ml={8}><Svg s={16}><path d="M1 1h14v9l-5 5H1z" fill="#eada5a" stroke="#c8b830" /><path d="M3 4.500h10M3 7.500h8M3 10.500h5" stroke="#3a3614" strokeWidth="1.200" /><path d="M15 10h-5v5z" fill="#fffbd0" /></Svg></MenuIcon>
            <MenuIcon $ml={8}><Svg s={16}><path d="M1 1h13v13H1z" fill="#5b9ad4" stroke="#c8d8e8" /><path d="M1.500 13.500v-3l4-3 3 3 2-2 3 3v2z" fill="#37735d" /><circle cx="5" cy="5" r="2" fill="#f2dd43" /><path d="M12.500 9v7M9 12.500h7" stroke="#111" strokeWidth="3" /><path d="M12.500 9.500v6M9.500 12.500h6" stroke="#fff" strokeWidth="1.500" /></Svg></MenuIcon>
            <MenuIcon $ml={9}><Svg s={16}><path d="M3 1h10l2 4H1z" fill="#e0a152" /><path d="M2 7h12v6.500H2z" fill="#c07b30" /><path d="M1 5.500h14v2H1z" fill="#efba70" /><path d="M6.500 7h3v3h-3z" fill="#6b4010" /></Svg></MenuIcon>
            <MenuIcon $ml={24}><Svg s={16} w={20}><circle cx="7.500" cy="6.500" r="5.500" fill="#56636b" stroke="#c9cdcd" strokeWidth="1.800" /></Svg></MenuIcon>
          </MenuRow>

          <Content>
            <Canvas>
              <Watermark>Objects</Watermark>
              <NodeArt width="598" height="695" viewBox="69 133 598 695">
                <defs><clipPath id="bulbClip"><path d={bulbPath} transform="scale(.97 .95)" /></clipPath></defs>
                <Dot x={285} y={320.5} />
                <rect x="248" y="331.500" width="81.500" height="24.500" rx="4" fill="#dedede" stroke="#888" strokeWidth=".6" />
                <rect x="244.500" y="327.500" width="83" height="26.500" rx="4" fill="#505050" />
                <rect x="244.500" y="327" width="81.500" height="25" rx="4" fill="#cfcfcf" stroke="#e8e8e8" strokeWidth=".8" />
                <path d="M248 328.500h8L254 351h-6q-2.500 0-2.500-3v-17q0-2.500 2.500-2.500z" fill="#a8e51c" /><path d="M256 328l-2 23.500M315.500 328l-2.500 23.500" stroke="#777" strokeWidth=".9" />
                <path d="M316 328.500h6.500q2.500 0 2.500 2.500v17q0 3-2.500 3H313.500z" fill="#2f8dff" />
                <rect x="275.500" y="331" width="8.500" height="14" rx="3" fill="#557a9f" /><path d="M278 332v12" stroke="#a8c4dc" strokeWidth="1.500" /><circle cx="289.500" cy="339.500" r="5.300" fill="#c03325" /><path d="M285 335l5 10.500q-5 3.500-10 0z" fill="#f4e059" />
                <Dot x={285} y={358.5} />
                <Dot x={285} y={444.5} /><Dot x={285} y={489} />
                <path d="M248 457.500h18q3.500 0 4.500-3.500t6-4h17q5 0 6 4t4.500 3.500h18.500q3.500 0 3.500 4v17q0 4-3.500 4H248q-3.500 0-3.500-4v-17q0-4 3.500-4z" fill="#4b8dc4" />
                <path d="M248 459h7.500l-2 22.500H248q-2-0-2-3v-17q0-2.500 2-2.500z" fill="#a8e51c" /><path d="M316 459h6.500q2 0 2 2.500v17q0 3-2 3H313.500z" fill="#2f8dff" />
                <path d="M255.500 458.500l-2 23.500M315.700 458.500l-2.500 23.500" stroke="#3a5f7c" />
                <g transform="translate(275 457)"><Cam /></g>
                <Dot x={296.7} y={524.7} /><Dot x={296.7} y={579.5} /><BulbNode x={311.3} y={551.7} sel />
                <Dot x={296.7} y={627.5} /><Dot x={296.7} y={682} /><BulbNode x={311} y={654.7} />
                <Lock x={344} y={564} /><Lock x={344} y={667} />
              </NodeArt>
              <NodeLabel $x={264} $y={180}><NodeType>Geometry</NodeType>testgeometry_pighead1</NodeLabel>
              <NodeLabel $x={264} $y={323}>cam1</NodeLabel>
              <NodeLabel $x={270} $y={391}><NodeType>Light</NodeType>spotlight1</NodeLabel>
              <NodeLabel $x={270} $y={494}><NodeType>Light</NodeType>spotlight2</NodeLabel>
            </Canvas>

            <Params>
              <Header>
                <Svg s={20} w={20}><g transform="translate(-1 2) scale(.85)"><Bulb /></g><path d="M12 15.500h7l-3.500 3.500z" fill="#999" /></Svg>
                <OpType>Light</OpType><NameField>spotlight1</NameField>
                <HeaderIcons>
                  <Svg><g transform="translate(0 -1)"><path d={rays(8, 4, 8, 10, 10)} stroke="#dcdcd6" strokeWidth="2.200" /><circle cx="10" cy="10" r="3.900" fill="none" stroke="#dcdcd6" strokeWidth="2.600" /></g><path d="M13 15.500h7l-3.500 3.500z" fill="#999" /></Svg>
                  <Svg><path d="M6 2h4l-1 5h3l1-5h4l-3 14h-4l1-5H8l-1 5H3z" fill="#14365e" stroke="#e0e4e8" strokeWidth="1.200" /><path d="M13 15.500h7l-3.500 3.500z" fill="#999" /></Svg>
                  <Svg><path d="M12 12l5 5" stroke="#d8d8d8" strokeWidth="2.500" /><circle cx="8.500" cy="8.500" r="5.500" fill="#55636c" stroke="#d0d4d4" strokeWidth="1.600" /></Svg>
                  <Svg><circle cx="10" cy="9" r="6.300" fill="#4a5962" stroke="#d0d4d4" strokeWidth="1.400" /><path d="M10.300 8L9.300 13M10.800 5.200v1" stroke="#fff" strokeWidth="1.700" /></Svg>
                </HeaderIcons>
              </Header>
              <AssetRow>
                <AssetLabel>Asset Name and Path</AssetLabel>
                <Combo $w={169}>hlight::2.0<ComboArrows><UpDown /></ComboArrows></Combo><PathButton>D:/0software/Houdini195/houdini/otls/OPlibObject.hda</PathButton>
              </AssetRow>
              <Tabs $mt={5}><Tab $w={70} $b>Transform</Tab><Tab $w={42} $on $b>Light</Tab><Tab $w={56}>Shadow</Tab><Tab $w={39} $b>Misc</Tab></Tabs>
              <CheckRow w={137} text="Enable" mt={4} />
              <CheckRow w={137} text="Enable In Viewport" />
              <Row><Label $w={137} $dy={2}>Type</Label><Combo $w={98}>Point<ComboArrows><UpDown /></ComboArrows></Combo></Row>
              <Row $mt={1}><Label $w={137} $dy={2}>Color</Label><Swatch /><Wheel /><Field $w={124} $gap={2}>1</Field><Field $w={124} $b $gap={2}>0</Field><Field $w={124} $b>0</Field></Row>
              <SliderRow w={137} text="Intensity" value="7.38" b at={1170} mt={1} />
              <SliderRow w={137} text="Exposure" value="0" at={1083} />
              <Row $mt={1}><Label $w={137}>Contributions</Label><Field $w={43}>0</Field><Small>+</Small><Small $off>−</Small><Clear>Clear</Clear></Row>
              <Row $mt={10}><Label $w={137}>Categories</Label><Field $w={460} /></Row>
              <Row><Label $w={137}>LPE Tag</Label><Field $w={460} /></Row>
              <SliderRow w={137} text="Sampling Quality" value="1" at={937} off />
              <CheckRow w={137} text="Render Light Geometry" off />
              <Sub>
                <Tabs $mt={1}><Tab $w={113} $on $b>Spot Light Options</Tab><Tab $w={107}>Area Light Options</Tab><Tab $w={120}>Distant Light Options</Tab><Tab $w={116}>Attenuation Options</Tab></Tabs>
                <CheckRow w={130} text="Enable Spot Light" b mt={4} />
                <CheckRow w={130} text="Use cone angle for field of view" />
                <SliderRow w={130} text="Projection Angle" value="45" at={1083} off />
                <SliderRow w={130} text="Cone Angle" value="45" at={992} />
                <SliderRow w={130} text="Cone Delta" value="10" at={920} />
                <SliderRow w={130} text="Cone Rolloff" value="1" at={937} />
                <Divider $mt={10} $mb={11} />
                <MapRow text="Projection Map" />
                <SliderRow w={130} text="Near Clipping" value="0.001" b at={900} />
                <SliderRow w={130} text="Far Clipping" value="9216.17" b at={1237} />
                <Divider $mt={10} $mb={11} />
                <MapRow text="Environment/IES Map" />
                <Row><Label $w={130} $off $dy={2}>Environment Space</Label><Combo $w={157} $off>Object Space<ComboArrows $off><UpDown c="#5c5c5c" /></ComboArrows></Combo></Row>
              </Sub>
            </Params>
          </Content>
        </Pane>
      </Main>

      <Overlay width="1261" height="828" fill="#ff2312">
        <path d="M211.500 207.500L456 59.500L452.500 54.500H471.500L461.500 70.500L459.500 66L212.500 209Z" />
        <path d="M509 162.300L656 145.500L654.500 139.500L669.500 147L656.500 156L657 151.500L509 164Z" />
        <path d="M499 254.300L754.500 264.500L751.500 260.500L769 270L751.500 278.500L754.500 274L499 256Z" />
      </Overlay>
    </Window>
  );
}
